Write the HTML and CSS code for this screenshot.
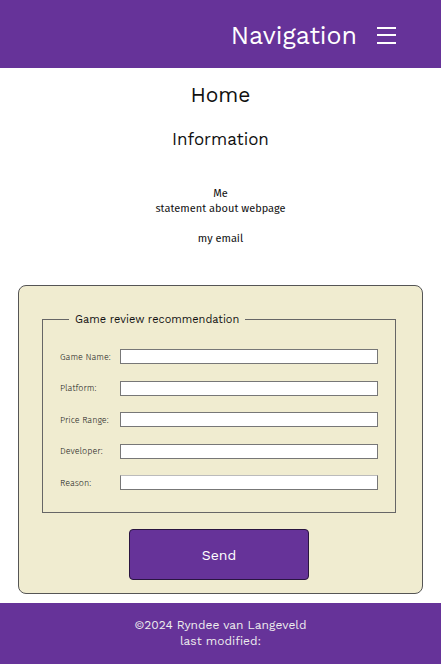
FILE: index.html
```html
<!DOCTYPE html>
<html lang="en">
<head>
<meta charset="utf-8">
<title>Home</title>
<link rel="stylesheet" href="styles.css">
</head>
<body>
<header class="topbar">
  <span class="nav-title">Navigation</span>
  <span class="burger" aria-label="menu"><i></i><i></i><i></i></span>
</header>
<main class="content">
  <h1 class="page-title">Home</h1>
  <h2 class="section-title">Information</h2>
  <div class="about">
    <p class="about-lines">Me<br>statement about webpage</p>
    <p class="about-lines">my email</p>
  </div>
  <form class="review-form">
    <fieldset class="review-set">
      <legend class="review-legend">Game review recommendation</legend>
      <div class="fields">
        <label class="field-label" for="g">Game Name:</label><input class="field-input" id="g" type="text">
        <label class="field-label" for="p">Platform:</label><input class="field-input" id="p" type="text">
        <label class="field-label" for="r">Price Range:</label><input class="field-input" id="r" type="text">
        <label class="field-label" for="d">Developer:</label><input class="field-input" id="d" type="text">
        <label class="field-label" for="e">Reason:</label><input class="field-input reason" id="e" type="text">
      </div>
    </fieldset>
    <button class="send" type="button">Send</button>
  </form>
</main>
<footer class="footer">
  <p class="footer-line">©2024 Ryndee van Langeveld</p>
  <p class="footer-line">last modified:</p>
</footer>
</body>
</html>
```
FILE: styles.css
```css
* { box-sizing: border-box; }
body {
  margin: 0;
  font-family: "Work Sans", Inter, "Noto Sans", sans-serif;
  color: #111;
  background: #fff;
}
.topbar {
  height: 68px;
  background: #663399;
  display: flex;
  align-items: center;
  justify-content: flex-end;
  padding: 0 45px 0 0;
  gap: 20px;
}
.nav-title {
  color: #fff;
  font-size: 25px;
  font-weight: 400;
  margin-top: 2px;
}
.burger {
  width: 19px;
  height: 17px;
  display: flex;
  flex-direction: column;
  justify-content: space-between;
  margin-top: 2px;
}
.burger i {
  display: block;
  height: 2px;
  background: #fff;
}
.content {
  display: flex;
  flex-direction: column;
  align-items: center;
}
.page-title {
  margin: 14px 0 0;
  font-size: 21px;
  font-weight: 400;
  line-height: 26px;
}
.section-title {
  margin: 20px 0 0;
  font-size: 17px;
  font-weight: 400;
  line-height: 22px;
}
.about {
  margin-top: 36px;
  text-align: center;
  font-family: "Fira Sans", Roboto, sans-serif;
  font-size: 11px;
  line-height: 15px;
}
.about-lines { margin: 0 0 15px; }
.review-form {
  align-self: stretch;
  margin: 24px 18px 0;
  background: #f0ecd0;
  border: 1px solid #555;
  border-radius: 8px;
  padding: 27px 26px 13px 23px;
  display: flex;
  flex-direction: column;
  align-items: center;
}
.review-set {
  align-self: stretch;
  margin: 0;
  border: 1px solid #666;
  padding: 23px 17px 22px 17px;
}
.review-legend {
  margin-left: 9px;
  padding: 0 6px;
  font-size: 11px;
  font-family: "Work Sans", Inter, "Noto Sans", sans-serif;
  color: #111;
}
.fields {
  display: grid;
  grid-template-columns: 60px 1fr;
  row-gap: 16.5px;
  align-items: center;
}
.field-label {
  font-family: "Fira Sans", Roboto, sans-serif;
  font-size: 9px;
  font-weight: 300;
  color: #222;
}
.field-input {
  height: 15px;
  margin: 0;
  border: 1px solid #777;
  background: #fff;
  padding: 0;
}
.reason { border-top-color: #bbb; }
.send {
  margin-top: 16px;
  width: 180px;
  height: 51px;
  background: #663399;
  border: 1px solid #2a1540;
  border-radius: 4px;
  color: #fff;
  font-family: "Work Sans", Inter, "Noto Sans", sans-serif;
  font-size: 14px;
}
.footer {
  margin-top: 9px;
  background: #663399;
  height: 61px;
  padding-top: 14px;
  text-align: center;
  color: #eee;
  font-size: 12px;
  line-height: 16px;
}
.footer-line { margin: 0; }
```
